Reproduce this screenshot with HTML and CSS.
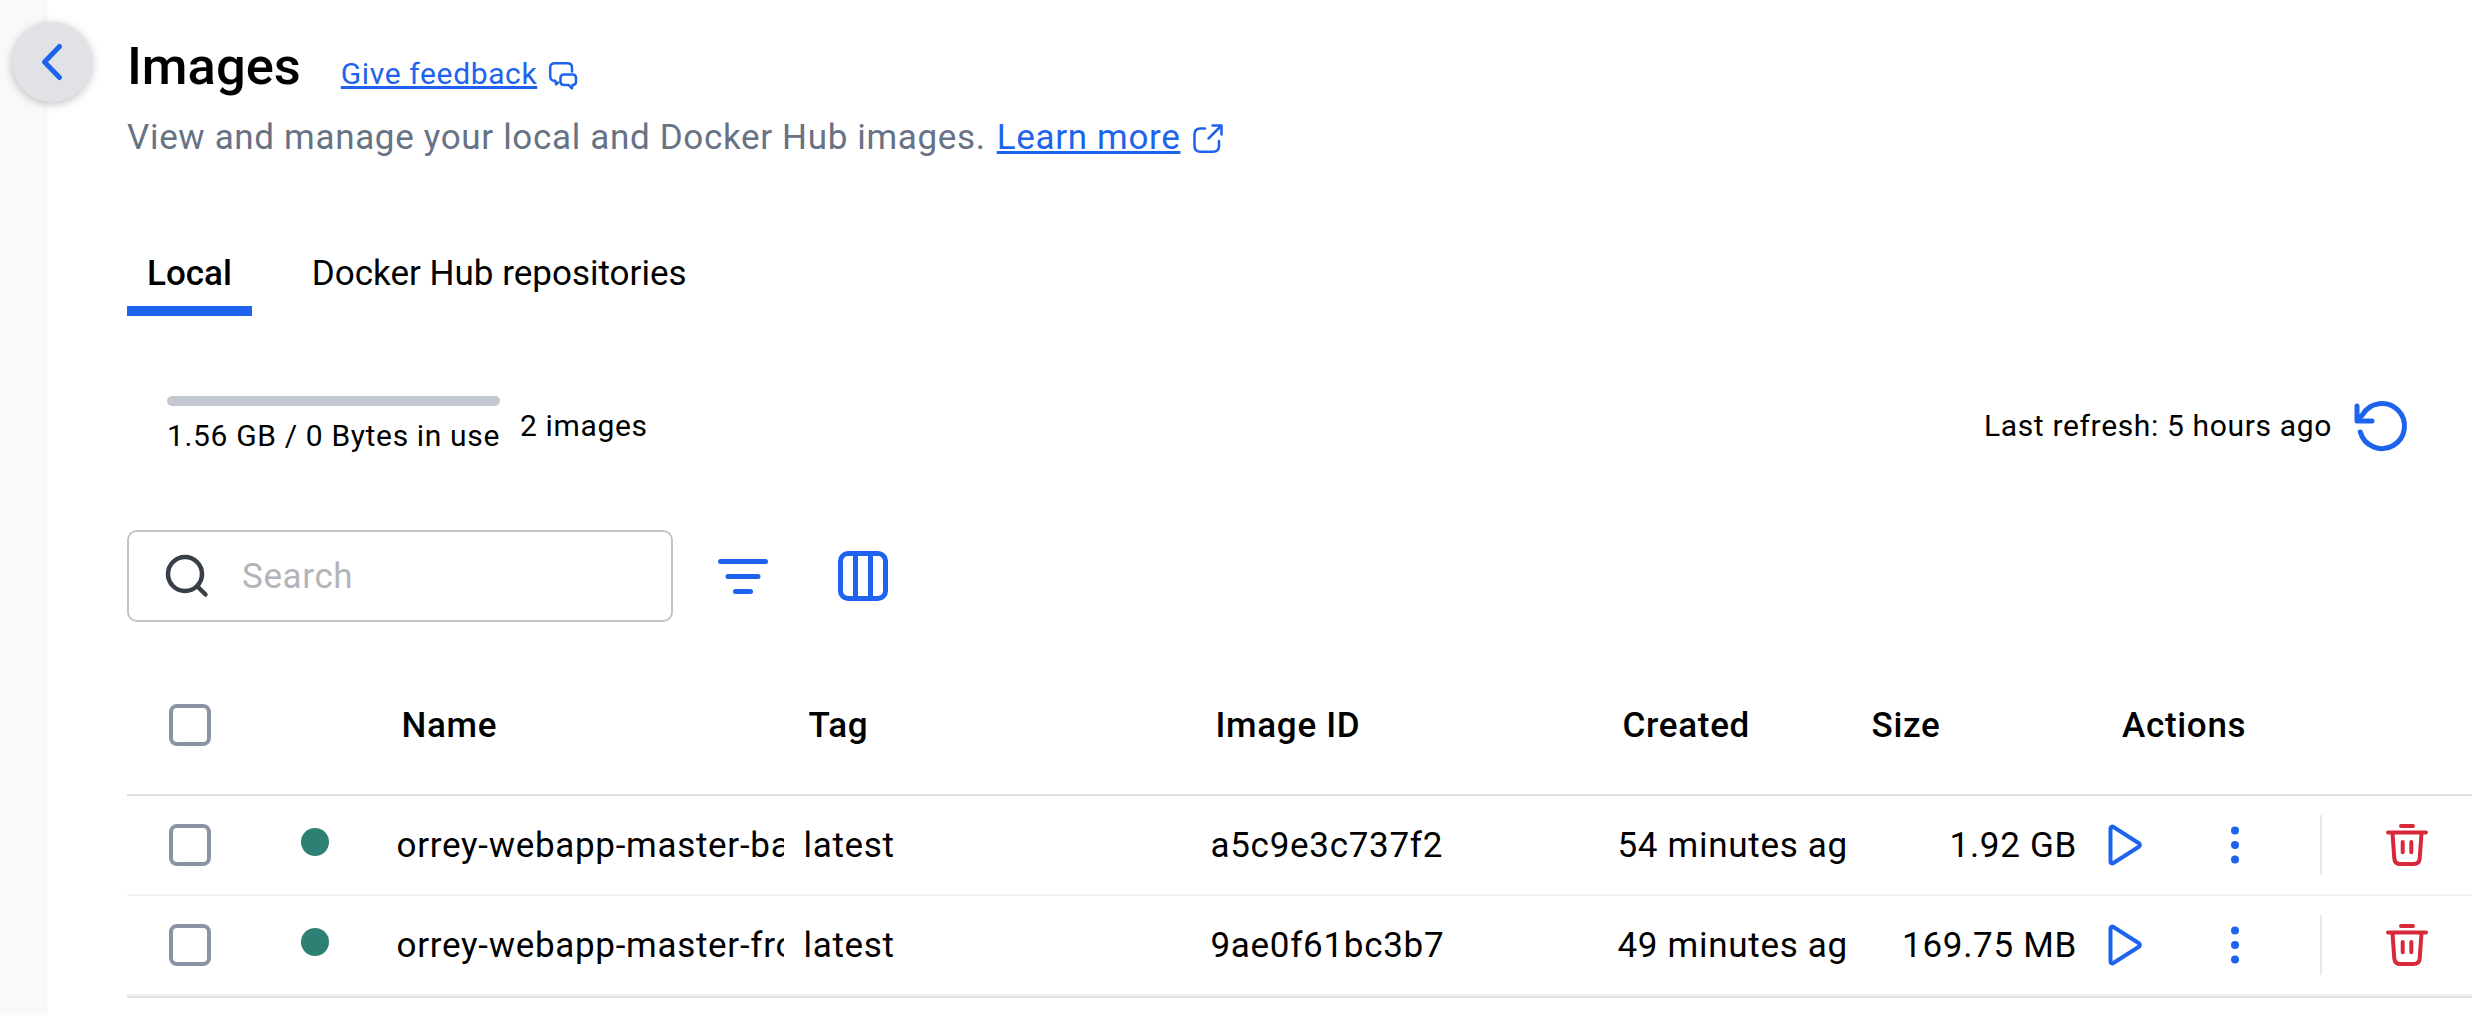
FILE: index.html
```html
<!DOCTYPE html>
<html lang="en">
<head>
<meta charset="utf-8">
<title>Images</title>
<link rel="stylesheet" href="styles.css">
</head>
<body>
<svg class="sprite" aria-hidden="true">
  <symbol id="play" viewBox="0 0 50 50"><path d="M10.500 8.500v33a1.800 1.800 0 0 0 2.900 1.500l25.500-16.200a2.200 2.200 0 0 0 0-3.600l-25.500-16.200a1.800 1.800 0 0 0-2.900 1.500z"/></symbol>
  <symbol id="trash" viewBox="0 0 50 50"><path d="M19 6h12M6 12.500h38M10.500 13l1.800 25.500c.3 3.500 2.500 5.500 6 5.500h13.400c3.500 0 5.700-2 6-5.500l1.800-25.500M20.700 22v10.200M29.300 22v10.200"/></symbol>
  <symbol id="dots" viewBox="0 0 50 50"><circle cx="25" cy="10.500" r="4"/><circle cx="25" cy="25" r="4"/><circle cx="25" cy="39.500" r="4"/></symbol>
</svg>
<div class="app">
  <aside class="sidebar"></aside>
  <button class="collapse" aria-label="Collapse"><svg width="80" height="80" viewBox="0 0 80 80"><path d="M47.500 24.500 32.500 40l15 15.500"/></svg></button>
  <main class="main">
    <header class="title-row">
      <h1>Images</h1>
      <a class="feedback"><span class="link">Give feedback</span><svg width="30" height="30" viewBox="0 0 30 30"><path d="M10 21.500 8.200 23.500 7.200 19.800C3.800 19.800 2.200 18.200 2.200 15V6.700C2.200 3.700 3.700 2.200 6.700 2.200H19.500c3 0 4.500 1.500 4.500 4.500v3.800M16 13.500h8.500c2.400 0 3.500 1.100 3.500 3.500v3.500c0 2.200-1 3.400-3.500 3.500l-.6 3.400-3.200-3.400H16c-2.400 0-3.500-1.100-3.500-3.500V17c0-2.400 1.100-3.500 3.500-3.500z"/></svg></a>
    </header>
    <p class="subtitle"><span>View and manage your local and Docker Hub images.</span> <a class="learn"><span class="link">Learn more</span><svg width="30" height="30" viewBox="0 0 30 30"><path d="M12 4.500H7.500c-4 0-6 2-6 6v11.300c0 4 2 6 6 6H20c4 0 6-2 6-6V17M19.500 1.500h9v9M28 2 15.500 14.500"/></svg></a></p>
    <nav class="tabs"><a class="tab active"><span>Local</span></a><a class="tab"><span>Docker Hub repositories</span></a></nav>
    <section class="status">
      <div class="usage"><div class="bar"></div><span>1.56 GB / 0 Bytes in use</span></div>
      <span class="count">2 images</span>
      <span class="refresh">Last refresh: 5 hours ago</span>
      <svg class="reload" width="60" height="60" viewBox="0 0 60 60"><path d="M5 10v15h15M5.500 24.500Q7.500 21.500 10.500 18.800A22.500 22.500 0 1 1 8.300 36"/></svg>
    </section>
    <section class="toolbar">
      <div class="search"><svg width="50" height="50" viewBox="0 0 50 50"><circle cx="23" cy="23" r="17"/><path d="m35.500 35.500 8 8"/></svg><span>Search</span></div>
      <svg class="tool" width="60" height="60" viewBox="0 0 60 60"><path d="M7.500 15.500h45M15 30.500h30M22.500 45.500h15"/></svg>
      <svg class="tool" width="60" height="60" viewBox="0 0 60 60"><rect x="7.500" y="7.500" width="45" height="45" rx="7.500"/><path d="M22.500 7.500v45M37.500 7.500v45"/></svg>
    </section>
    <section class="table">
      <div class="row head">
        <div class="cell check"><i class="box"></i></div><div class="cell"></div>
        <div class="cell"><span>Name</span></div><div class="cell"><span>Tag</span></div><div class="cell"><span>Image ID</span></div><div class="cell"><span>Created</span></div><div class="cell"><span>Size</span></div><div class="cell act"><span>Actions</span></div>
      </div>
      <div class="row">
        <div class="cell check"><i class="box"></i></div><div class="cell"><i class="dot"></i></div>
        <div class="cell"><span>orrey-webapp-master-backend</span></div><div class="cell"><span>latest</span></div><div class="cell"><span>a5c9e3c737f2</span></div><div class="cell created"><span>54 minutes ago</span></div><div class="cell num"><span>1.92 GB</span></div>
        <div class="actions"><svg class="ico"><use href="#play"/></svg><svg class="ico more"><use href="#dots"/></svg><i class="sep"></i><svg class="ico bin"><use href="#trash"/></svg></div>
      </div>
      <div class="row last">
        <div class="cell check"><i class="box"></i></div><div class="cell"><i class="dot"></i></div>
        <div class="cell"><span>orrey-webapp-master-frontend</span></div><div class="cell"><span>latest</span></div><div class="cell"><span>9ae0f61bc3b7</span></div><div class="cell created"><span>49 minutes ago</span></div><div class="cell num"><span>169.75 MB</span></div>
        <div class="actions"><svg class="ico"><use href="#play"/></svg><svg class="ico more"><use href="#dots"/></svg><i class="sep"></i><svg class="ico bin"><use href="#trash"/></svg></div>
      </div>
    </section>
  </main>
</div>
</body>
</html>
```
FILE: styles.css
```css
* { box-sizing: border-box; }
body { margin: 0; background: #fff; color: #000; font-family: Roboto, sans-serif; font-size: 35px; letter-spacing: 0.625px; overflow: hidden; }
svg { display: block; flex: none; fill: none; stroke: #1d63ed; stroke-width: 5; stroke-linecap: round; stroke-linejoin: round; }
.sprite { position: absolute; width: 0; height: 0; }
.app { position: relative; display: flex; width: 2489px; height: 1015px; }
.sidebar { width: 47px; flex: none; background: #f9f9f9; border-right: 1px solid #f5f5f5; }
.collapse { position: absolute; left: 12px; top: 22px; width: 80px; height: 80px; padding: 0; border: 0; border-radius: 50%; background: #e1e2e6; box-shadow: 0 2px 10px rgba(0, 0, 0, 0.25); }
.main { flex: 1; min-width: 0; padding: 34px 17px 0 80px; }
.title-row { display: flex; align-items: baseline; height: 76px; }
h1 { margin: 0; font-size: 52.5px; font-weight: 500; line-height: 65px; letter-spacing: 0; }
.link { color: #1d63ed; text-decoration: underline; text-decoration-thickness: 3px; text-underline-offset: 2px; }
.feedback { display: flex; align-items: center; gap: 11px; margin-left: 40px; font-size: 30px; line-height: 40px; }
.feedback svg, .learn svg { stroke-width: 2.500; }
.feedback svg { margin-top: 4px; }
.subtitle { display: flex; align-items: center; gap: 11px; height: 54px; margin: 0; color: #677285; letter-spacing: 0.665px; }
.learn { display: flex; align-items: center; gap: 13px; }
.learn svg { margin-top: 4px; }
.tabs { display: flex; height: 92px; margin-top: 60px; }
.tab { padding: 0 20px; margin-right: 40px; line-height: 99px; letter-spacing: 0; }
.tab.active { font-weight: 500; border-bottom: 10px solid #1d63ed; }
.status { display: flex; align-items: center; height: 100px; margin-top: 60px; padding: 0 60px 0 40px; font-size: 30px; letter-spacing: 0.65px; }
.usage { display: flex; flex-direction: column; gap: 10px; margin-right: 20px; line-height: 40px; }
.bar { height: 10px; border-radius: 5px; background: #c4c8d1; }
.count, .refresh { padding-bottom: 2px; }
.refresh { margin-left: auto; margin-right: 20px; }
.toolbar { display: flex; align-items: center; height: 92px; margin-top: 54px; }
.search { display: flex; align-items: center; gap: 30px; width: 546px; height: 92px; padding-left: 33px; border: 2px solid #c4c4c4; border-radius: 10px; color: #b3b4b9; }
.search svg { stroke: #393f49; stroke-width: 4.500; }
.tool { margin-left: 40px; }
.tool + .tool { margin-left: 60px; }
.table { margin-top: 34px; border-bottom: 2px solid #e0e0e0; }
.row { display: grid; grid-template-columns: 162.5px 97px 407px 407px 407px 249px 228px 387.5px; align-items: center; height: 100px; border-bottom: 2px solid #f2f2f2; letter-spacing: 0.7px; }
.cell { overflow: hidden; margin: 0 9.5px 0 10px; white-space: nowrap; }
.head { height: 140px; border-color: #e0e0e0; font-weight: 500; }
.head .cell { padding-left: 5px; }
.head .act { padding-left: 27.5px; }
.created { margin-right: 10.5px; }
.num { margin-right: 7.5px; text-align: right; }
.box { display: block; width: 42px; height: 42px; border: 4px solid #8993a5; border-radius: 8px; margin-left: 32px; }
.head .box { margin-left: 27px; }
.dot { display: block; width: 28px; height: 28px; margin: 0 0 6px 1.5px; border-radius: 50%; background: #2e7f74; }
.actions { display: flex; align-items: center; padding-left: 15.5px; }
.ico { width: 50px; height: 50px; stroke-width: 4; }
.more { margin-left: 60px; fill: #1d63ed; stroke: none; }
.sep { width: 2px; height: 60px; margin-left: 60px; background: #e8e8e8; }
.bin { margin-left: 60px; stroke: #d7293a; }
```
